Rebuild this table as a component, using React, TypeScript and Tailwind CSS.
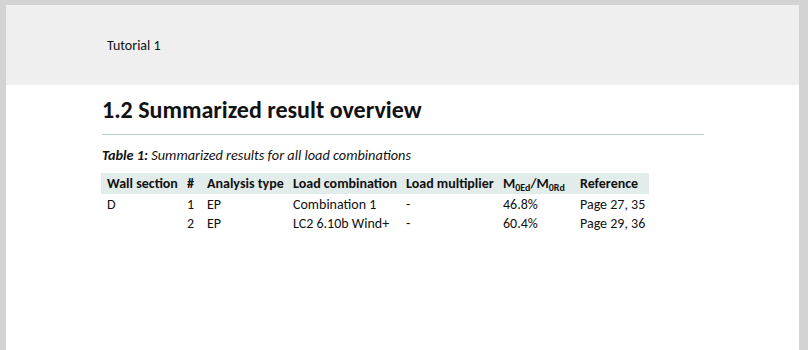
import React from "react";

const font = { fontFamily: 'Carlito, Calibri, Lato, "Liberation Sans", sans-serif' };

export default function App() {
  const cols = "grid w-[548px] grid-cols-[80px_20px_86px_113px_97px_77px_75px]";
  const rows = [
    ["D", "1", "EP", "Combination 1", "-", "46.8%", "Page 27, 35"],
    ["", "2", "EP", "LC2 6.10b Wind+", "-", "60.4%", "Page 29, 36"],
  ];
  return (
    <div className="min-h-[350px] bg-[#d3d3d3] pt-[5px] pl-[6px] pr-[9px] text-[#111]" style={font}>
      <div className="h-[345px] bg-white">
        <div className="flex h-[80px] items-center bg-[#efefef] pl-[101px] text-[14px]">Tutorial 1</div>
        <div className="pl-[96px]">
          <h1 className="pt-[10px] text-[24px] font-bold leading-[30px]">1.2 Summarized result overview</h1>
          <div className="mt-[9px] h-px w-[602px] bg-[#b2d3c9]" />
          <p className="mt-[11px] text-[14.3px] italic leading-[18px]">
            <span className="font-bold">Table 1:</span> Summarized results for all load combinations
          </p>
          <div className="mt-[9px] -ml-[1px] text-[14px]">
            <div className={`${cols} h-[21px] items-center bg-[#e2ecea] font-bold`}>
              <div className="pl-[6px]">Wall section</div>
              <div className="pl-[6px]">#</div>
              <div className="pl-[6px]">Analysis type</div>
              <div className="pl-[6px]">Load combination</div>
              <div className="pl-[6px]">Load multiplier</div>
              <div className="whitespace-nowrap pl-[6px]">
                M<sub className="text-[10px]">0Ed</sub>/M<sub className="text-[10px]">0Rd</sub>
              </div>
              <div className="pl-[6px]">Reference</div>
            </div>
            {rows.map((r, i) => (
              <div key={i} className={`${cols} h-[19px] items-center`}>
                {r.map((c, j) => (
                  <div key={j} className="whitespace-nowrap pl-[6px]">{c}</div>
                ))}
              </div>
            ))}
          </div>
        </div>
      </div>
    </div>
  );
}
